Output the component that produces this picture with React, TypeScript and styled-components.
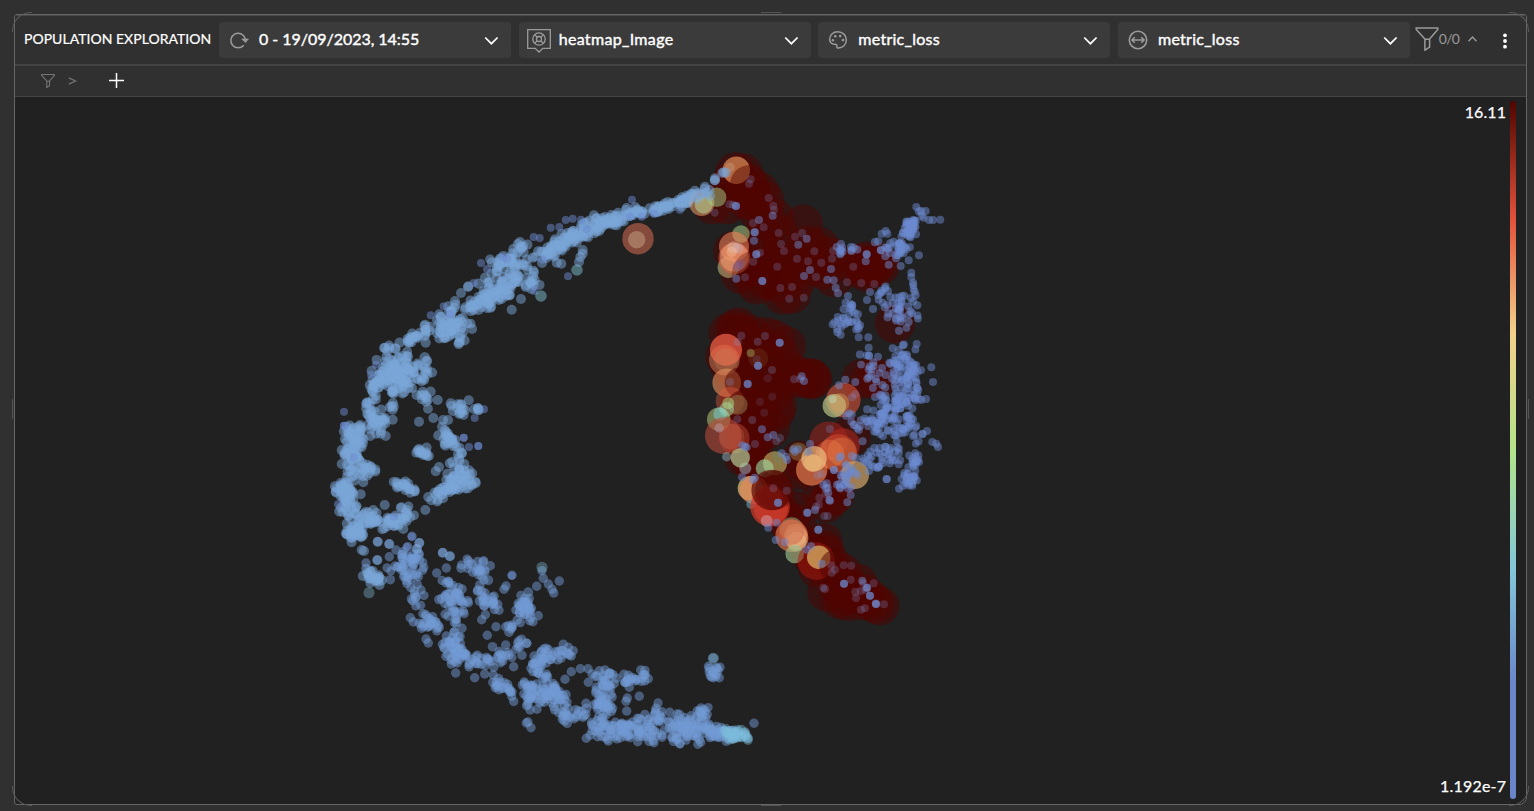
import React from "react";
import styled, { createGlobalStyle } from "styled-components";

const GlobalStyle = createGlobalStyle`
  * { box-sizing: border-box; }
  html, body { margin: 0; background: #303030; overflow: hidden; }
  body { font-family: Lato, "Noto Sans", sans-serif; color: #fff; }
`;

const Page = styled.main`
  position: relative;
  width: 1534px;
  height: 811px;
  padding: 14px 7px 6px 14px;
  background: #303030;
`;

const Panel = styled.section`
  display: flex;
  flex-direction: column;
  width: 1513px;
  height: 791px;
  border: 1px solid #666;
  border-radius: 3px 3px 8px 3px;
  background: #212121;
`;

const Header = styled.header`
  display: flex;
  align-items: center;
  height: 51px;
  padding: 0 12px 0 9px;
  background: #303030;
  border-top: 1px solid #484848;
  border-bottom: 2px solid #434343;
`;

const Title = styled.h1<{ $spacing: number }>`
  width: 195px;
  margin: 0;
  padding-bottom: 3px;
  font-size: 14px;
  font-weight: 400;
  letter-spacing: ${(p) => p.$spacing}px;
  white-space: nowrap;
  -webkit-text-stroke: 0.2px #fff;
`;

const Select = styled.div`
  display: flex;
  align-items: center;
  width: 292px;
  height: 36px;
  margin-right: 7.67px;
  padding: 0 12px 0 0;
  border-radius: 4px;
  background: #3b3b3b;
`;

const IconSlot = styled.span`
  display: flex;
  justify-content: center;
  width: 40px;
  color: #9b9b9b;
`;

const Value = styled.span<{ $spacing: number }>`
  flex: 1;
  padding-bottom: 2px;
  font-size: 16px;
  font-weight: 400;
  line-height: 20px;
  letter-spacing: ${(p) => p.$spacing}px;
  white-space: nowrap;
  -webkit-text-stroke: 0.4px #fff;
`;

const FilterCount = styled.div`
  display: flex;
  align-items: center;
  margin-left: -3px;
  padding-bottom: 2px;
  color: #9b9b9b;
  font-size: 14px;
  svg + span { margin: 0 9px 2px 0; letter-spacing: -0.6px; }
`;

const MenuButton = styled.button`
  display: flex;
  margin: 1px 0 0 auto;
  padding: 0 7px;
  border: 0;
  background: none;
  color: #fff;
`;

const FilterRow = styled.div`
  display: flex;
  align-items: center;
  height: 31px;
  padding: 0 0 1px 26px;
  background: #303030;
  border-bottom: 1px solid #464646;
  color: #767676;
`;

const Crumb = styled.span`
  display: flex;
  margin: 0 32px 0 13px;
`;

const Plot = styled.div`
  display: flex;
  position: relative;
  flex: 1;
`;

const Legend = styled.div`
  position: absolute;
  top: 4px;
  right: 10px;
  bottom: 5px;
  display: flex;
  gap: 4px;
`;

const LegendLabels = styled.div`
  display: flex;
  flex-direction: column;
  justify-content: space-between;
  align-items: flex-end;
  padding: 1px 0 3px;
  font-size: 16px;
  line-height: 20px;
  -webkit-text-stroke: 0.25px #fff;
`;

const LegendText = styled.span<{ $spacing: number }>`
  letter-spacing: ${(p) => p.$spacing}px;
  margin-right: ${(p) => -p.$spacing}px;
`;

const LegendBar = styled.div`
  width: 6px;
  border-radius: 3px;
  background: linear-gradient(#500500, #e3523b 17%, #f3d28a 33.3%, #b3e38a 50%, #83c7d8 67%, #6b85cb 83.5%);
`;

const Corner = styled.i<{ $v: "top" | "bottom"; $h: "left" | "right" }>`
  position: absolute;
  ${(p) => (p.$v === "top" ? "top: 12px" : "bottom: 5px")};
  ${(p) => (p.$h === "left" ? "left: 12px" : "right: 5px")};
  width: 20px;
  height: 20px;
  border: 0 solid #595959;
  ${(p) => `border-${p.$v}-width: 1px; border-${p.$h}-width: 1px; border-${p.$v}-${p.$h}-radius: 19px;`}
`;

const Grip = styled.i<{ $side: "top" | "bottom" | "left" | "right" }>`
  position: absolute;
  background: #555;
  ${(p) =>
    p.$side === "top" || p.$side === "bottom"
      ? `left: 761px; width: 20px; height: 1px; ${p.$side}: ${p.$side === "top" ? 12 : 5}px;`
      : `top: 399px; width: 1px; height: 20px; ${p.$side}: ${p.$side === "left" ? 12 : 5}px;`}
`;

/* ---------- icons ---------- */

const Reload = () => (
  <svg width="20" height="20" viewBox="0 0 20 20" fill="none" stroke="currentColor" strokeWidth="1.5">
    <path d="M14.8 15.2A7.3 7.3 0 1 1 16.1 8.2V10" />
    <path d="M12.8 9l3.6 3.6L19.4 9z" fill="currentColor" strokeWidth=".8" />
  </svg>
);

const Heatmap = () => (
  <svg width="24" height="26" viewBox="0 0 24 26" fill="none" stroke="currentColor" strokeWidth="1.3">
    <path d="M.7 2.7h22.6v18.6h-7.5L12 25l-3.8-3.7H.7z" />
    <circle cx="12" cy="12" r="6.2" />
    <circle cx="12" cy="12" r="2.5" />
    <path d="M7.6 7.6l2.6 2.6m3.6 3.6l2.6 2.6m0-8.8l-2.6 2.6m-3.6 3.6l-2.6 2.6" />
  </svg>
);

const Palette = () => (
  <svg width="20" height="20" viewBox="0 0 20 20" fill="none" stroke="currentColor" strokeWidth="1.5">
    <path d="M9.8 1.8C4.900 1.800 1.700 5 1.700 9.500c0 3 2.100 4.900 5 4.700 1.500-.1 2.300.5 2.200 1.900-.1 1.300.1 2.100 1.500 2 4.500-.2 7.900-3.500 7.900-8 0-4.800-3.500-8.300-8.500-8.300z" />
    <g fill="currentColor" stroke="none">
      <circle cx="4.900" cy="10.300" r="1.200" />
      <circle cx="7.300" cy="6.200" r="1.300" />
      <circle cx="12.200" cy="6.100" r="1.300" />
      <circle cx="15" cy="10.100" r="1.300" />
    </g>
  </svg>
);

const Width = () => (
  <svg width="20" height="20" viewBox="0 0 20 20" fill="none" stroke="currentColor" strokeWidth="1.600">
    <circle cx="10" cy="10" r="8.700" />
    <path d="M4 10h12M6.700 7.300L4 10l2.700 2.700M13.300 7.300L16 10l-2.700 2.700" />
  </svg>
);

const ChevronDown = () => (
  <svg width="15" height="10" viewBox="0 0 15 10" fill="none" stroke="#fff" strokeWidth="1.700" style={{ marginTop: 2 }}>
    <path d="M1.200 1.500l6.200 6.200 6.200-6.200" />
  </svg>
);

const ChevronUp = () => (
  <svg width="9" height="6" viewBox="0 0 9 6" fill="none" stroke="currentColor" strokeWidth="1.300">
    <path d="M.5 5.200L4.500 1l4 4.200" />
  </svg>
);

const Funnel = ({ size, weight }: { size: number; weight: number }) => (
  <svg width={size} height={size} viewBox="0 0 24 24" fill="none" stroke="currentColor" strokeWidth={weight}>
    <path d="M1.200 1h21.600v1.500L14.600 12v8.200l-4.700 3V12L1.200 2.500zM9.900 12.300h4.700" />
  </svg>
);

const Dots = () => (
  <svg width="4" height="16" viewBox="0 0 4 16" fill="currentColor">
    <circle cx="2" cy="2.300" r="1.900" />
    <circle cx="2" cy="8" r="1.900" />
    <circle cx="2" cy="13.700" r="1.900" />
  </svg>
);

const Plus = () => (
  <svg width="15" height="15" viewBox="0 0 15 15" fill="none" stroke="#fff" strokeWidth="1.500">
    <path d="M7.500 0v15M0 7.500h15" />
  </svg>
);

const Next = () => (
  <svg width="9" height="8" viewBox="0 0 9 8" fill="none" stroke="currentColor" strokeWidth="1.300">
    <path d="M.8.800L7.700 4 .8 7.200" />
  </svg>
);

/* ---------- scatter plot ---------- */

const SKY = "#7aa5d8";
const BLUE = "#7299d4";
const INDIGO = "#6c89d0";
const WINE = "#4f0400";

type Sample = [number, number, number, string, number?];

function makeRandom(seed: number) {
  let s = seed;
  return () => {
    s = (s * 1664525 + 1013904223) % 4294967296;
    return s / 4294967296;
  };
}

/* Each band: x1, y1, x2, y2, half width, number of samples. */
type Band = [number, number, number, number, number, number];

function spread(bands: Band[], r: number, color: string, seed: number, grow: number, opacity = 0.5): Sample[] {
  const rnd = makeRandom(seed);
  const out: Sample[] = [];
  for (const [x1, y1, x2, y2, w, n] of bands) {
    const len = Math.hypot(x2 - x1, y2 - y1) || 1;
    const ux = (x2 - x1) / len;
    const uy = (y2 - y1) / len;
    for (let i = 0; i < n; i++) {
      const t = rnd();
      const angle = rnd() * Math.PI * 2;
      const dist = Math.pow(rnd(), 0.65) * w * grow;
      const k = Math.sin(angle) * dist;
      const j = Math.cos(angle) * dist * 0.8;
      out.push([
        x1 + (x2 - x1) * t - uy * k + ux * j,
        y1 + (y2 - y1) * t + ux * k + uy * j,
        r * (0.96 + rnd() * 0.08),
        color,
        opacity,
      ]);
    }
  }
  return out;
}

/* Positions given in thirds of a pixel from a local origin. */
function local(ox: number, oy: number, r: number, color: string, xy: number[], opacity = 0.5): Sample[] {
  const out: Sample[] = [];
  for (let i = 0; i < xy.length; i += 2) out.push([ox + xy[i] / 3, oy + xy[i + 1] / 3, r, color, opacity]);
  return out;
}

function discs(ox: number, oy: number, rows: [number, number, number, string, number?][]): Sample[] {
  return rows.map(([x, y, r, c, o]) => [ox + x / 3, oy + y / 3, r / 3, c, o]);
}

const arc = spread(
  [
    [702, 193, 680, 202, 5, 28], [682, 202, 655, 209, 4, 34], [655, 209, 628, 215, 3.5, 20],
    [628, 215, 605, 223, 6, 36], [605, 223, 575, 234, 8, 46], [575, 235, 552, 249, 8, 34],
    [558, 246, 538, 256, 8, 24], [526, 246, 515, 250, 6, 10], [510, 258, 495, 264, 9, 18],
    [520, 266, 500, 280, 14, 40], [530, 262, 534, 288, 8, 14], [508, 288, 485, 304, 9, 36],
    [487, 298, 466, 310, 7, 24], [485, 285, 500, 285, 10, 14], [455, 307, 445, 320, 9, 12],
    [440, 329, 463, 327, 12, 50], [458, 342, 463, 344, 4, 4], [430, 326, 412, 340, 5, 16],
    [408, 345, 412, 340, 5, 8], [388, 350, 400, 348, 6, 8],
    [382, 376, 408, 367, 17, 78], [392, 372, 408, 384, 13, 34], [420, 360, 428, 375, 7, 14],
    [420, 385, 430, 404, 10, 14], [395, 385, 392, 410, 3, 10], [375, 378, 370, 405, 8, 20],
    [370, 412, 382, 428, 11, 36], [352, 425, 355, 445, 10, 40], [352, 445, 354, 475, 11, 52],
    [365, 465, 373, 474, 7, 12], [343, 485, 347, 500, 9, 48], [345, 508, 360, 518, 9, 20],
    [352, 525, 357, 538, 9, 38], [365, 520, 395, 522, 9, 38], [395, 522, 410, 510, 8, 20],
    [396, 482, 416, 492, 5, 20], [452, 405, 464, 412, 7, 14], [474, 412, 482, 409, 4, 5],
    [442, 430, 453, 446, 8, 22], [417, 447, 430, 458, 6, 14], [458, 450, 459, 468, 8, 12],
    [468, 477, 450, 487, 11, 46], [450, 488, 432, 499, 6, 24], [366, 573, 380, 582, 6, 26],
  ],
  5,
  SKY,
  17,
  1.02,
);

const tail = spread(
  [
    [395, 568, 420, 572, 15, 40], [402, 553, 425, 560, 8, 9], [415, 585, 425, 622, 11, 16],
    [422, 622, 437, 624, 8, 22], [450, 575, 460, 608, 11, 34], [465, 566, 490, 574, 10, 22],
    [478, 590, 492, 610, 8, 24], [441, 600, 460, 620, 9, 16], [451, 637, 457, 658, 11, 52],
    [463, 664, 490, 660, 10, 18], [492, 655, 505, 660, 10, 14], [522, 595, 527, 620, 10, 34],
    [495, 682, 515, 694, 7, 20], [518, 693, 552, 695, 13, 44], [535, 660, 545, 680, 10, 28],
    [540, 655, 570, 652, 7, 26], [545, 685, 562, 705, 11, 34], [556, 718, 586, 712, 9, 24],
    [590, 672, 616, 682, 8, 18], [602, 680, 606, 720, 10, 46], [590, 728, 625, 732, 10, 42],
    [625, 730, 660, 734, 11, 42], [640, 722, 665, 715, 8, 20], [625, 683, 645, 676, 6, 18],
    [667, 725, 697, 732, 14, 62], [695, 720, 705, 712, 8, 14], [700, 731, 735, 734, 8, 48],
    [711, 668, 718, 676, 7, 10], [511, 625, 520, 648, 6, 10],
  ],
  4.7,
  BLUE,
  83,
  1.03,
);

const teal = spread([[728, 734, 751, 733, 8, 34]], 5, "#7cbbdd", 5, 1, 0.4);

const loose: Sample[] = [
  ...local(350, 520, 4.7, BLUE, [
    83, 65, 117, 72, 173, 80, 208, 68, 186, 49, 201, 86, 138, 90, 118, 110, 82, 121, 48, 129, 260, 159, 278, 98,
    299, 109, 289, 144, 401, 122, 421, 137, 486, 166, 462, 208, 468, 198, 432, 229, 447, 271, 395, 299, 412, 346,
    438, 320, 467, 320, 487, 315, 565, 287, 549, 305, 467, 375, 491, 440, 516, 406, 498, 388, 530, 370, 530, 370,
    560, 199, 580, 175, 595, 192, 611, 219, 606, 208, 181, 293, 190, 306, 228, 357, 235, 369, 336, 325, 317, 459,
    374, 473, 404, 462, 430, 465, 640, 373, 645, 478, 664, 455, 691, 446, 714, 446, 715, 487, 765, 450, 822, 463,
    868, 529, 832, 534, 828, 544, 838, 502, 924, 549, 918, 565, 830, 573, 709, 655, 775, 663, 708, 550, 732, 554,
    534, 606, 529, 609, 543, 623, 540, 570, 561, 568, 534, 553, 1061, 569, 1067, 593, 872, 450, 895, 476, 886, 464,
    1212, 610, 1052, 667, 1090, 415, 628, 183, 576, 152, 989, 670, 990, 672, 912, 668, 863, 665, 1078, 445, 1110, 442,
    1090, 460, 1090, 473, 1108, 473,
  ]),
  ...local(320, 330, 5, SKY, [
    297, 275, 340, 264, 369, 270, 384, 270, 366, 290, 218, 239, 218, 269, 353, 210, 197, 318, 151, 318, 65, 402,
    130, 457, 122, 493, 194, 525, 160, 540, 250, 597, 187, 598, 173, 635, 208, 642, 298, 639, 291, 657, 125, 660,
    132, 663, 172, 690, 357, 411, 347, 424, 316, 540, 368, 668, 390, 679, 446, 211, 382, 431, 389, 400,
  ]),
  ...local(400, 170, 5, SKY, [
    335, 419, 363, 387, 582, 136, 680, 114, 706, 112, 548, 240, 548, 251, 541, 261, 537, 276, 204, 351, 205, 349,
    183, 369, 165, 393, 484, 281, 470, 278, 399, 319, 377, 351, 377, 346, 60, 488, 77, 518,
  ]),
  ...local(400, 170, 4, INDIGO, [
    696, 89, 497, 150, 518, 146, 543, 149, 452, 173, 478, 171, 401, 201, 419, 204, 243, 279, 261, 297, 221, 339,
    504, 319, 403, 363, 308, 261, 321, 267, 92, 436, 131, 409, 150, 432, 427, 269, 560, 178, 690, 140, 725, 140,
    763, 132, 840, 119,
  ]),
  ...local(320, 330, 4, INDIGO, [
    72, 245, 72, 287, 72, 287, 101, 382, 260, 651, 275, 620, 447, 351, 475, 348, 475, 348, 492, 238, 464, 264,
    431, 323, 431, 323, 54, 523, 168, 104, 153, 134, 575, 737, 222, 560,
  ]),
  ...local(350, 520, 5.6, "#7db4cf", [576, 142, 57, 218, 1090, 415], 0.4),
  ...local(400, 170, 5.8, "#7dc0cf", [531, 300, 423, 378], 0.5),
];

const wine: Sample[] = [
  ...local(680, 140, 19.500, WINE, [
    165, 95, 190, 98, 150, 130, 97, 194, 140, 195, 200, 130, 215, 158, 240, 155, 255, 182, 230, 210, 260, 240,
    285, 235, 370, 252, 300, 285, 250, 290, 385, 315, 412, 340, 390, 380, 340, 365, 330, 400, 290, 370, 240, 380,
    200, 385, 158, 332, 180, 403, 230, 435, 290, 430, 310, 466, 335, 463, 450, 350, 462, 413, 430, 390, 540, 370,
    556, 378, 580, 380, 565, 390, 600, 378, 530, 385, 240, 330, 260, 420, 350, 420, 420, 320, 305, 330, 200, 180,
    225, 185, 165, 135, 560, 362, 595, 365, 560, 398,
  ]),
  ...local(680, 300, 20, WINE, [
    645, 70, 545, 237, 575, 235, 595, 235, 512, 408, 165, 90, 145, 100, 180, 100, 215, 105, 260, 112, 285, 120,
    318, 138, 300, 170, 250, 180, 200, 180, 150, 195, 136, 170, 165, 240, 200, 250, 250, 240, 300, 240, 330, 215,
    370, 232, 394, 235, 397, 238, 350, 235, 290, 320, 285, 335, 240, 330, 200, 320, 180, 310, 270, 385, 235, 400,
    200, 400, 220, 450, 210, 470, 190, 430, 230, 360, 180, 290, 180, 350, 160, 140, 240, 285, 285, 275, 210, 135,
    255, 150, 390, 236, 175, 82,
  ]),
  ...local(680, 440, 19.500, WINE, [
    215, 10, 190, 50, 225, 80, 250, 110, 270, 165, 290, 200, 330, 258, 350, 250, 340, 210, 380, 318, 430, 307,
    430, 330, 440, 345, 425, 375, 412, 385, 440, 457, 475, 410, 490, 400, 500, 435, 490, 470, 505, 485, 535, 430,
    550, 460, 560, 470, 585, 492, 600, 498, 545, 482, 400, 350, 450, 175, 440, 190, 425, 160, 465, 165, 470, 130,
    385, 80, 360, 60, 360, 90, 430, 60, 480, 480, 520, 460, 310, 230, 390, 340, 470, 430, 575, 480, 440, 80,
  ]),
];

const hot: Sample[] = [
  ...discs(400, 170, [[714, 206, 47, "#e87355", 0.5], [710, 209, 26, "#c7a486", 0.5]]),
  ...discs(680, 140, [
    [65, 190, 38, "#efb078"], [71, 194, 27, "#b7df9e"], [110, 172, 29, "#a6cf86"],
    [183, 282, 26, "#b4d889"], [145, 382, 32, "#d8cd8d"], [163, 355, 48, "#e06547"], [162, 320, 45, "#f0875f", 0.55],
    [163, 352, 43, "#ffb584", 0.4], [169, 91, 41, "#ec995d", 0.65], [150, 82, 14, "#c8b49a", 0.3],
  ]),
  ...discs(680, 140, [
    [210, 135, 60, WINE, 0.45], [230, 405, 75, WINE, 0.3], [160, 322, 18, "#d9c3c2", 0.35], [175, 325, 16, "#c4b3ce", 0.35],
    [155, 335, 16, "#ffc9a0", 0.35], [172, 380, 14, "#77609a", 0.4], [182, 372, 14, "#77609a", 0.4],
  ]),
  ...discs(680, 300, [
    [133, 180, 46, "#c9835d"], [140, 248, 43, "#ea935f", 0.6], [180, 248, 46, WINE, 0.5],
    [150, 303, 43, "#e15c42", 0.4], [190, 320, 50, WINE, 0.5], [212, 159, 12, "#b2d27a", 0.4], [235, 175, 30, "#8b6533", 0.2],
    [138, 149, 48, "#f2654a", 0.7], [137, 180, 35, "#c58a60", 0.25],
    [116, 358, 35, "#c6d582"], [173, 314, 30, "#a5a166", 0.4], [140, 328, 22, "#99ddaa"], [120, 342, 20, "#78d7db"],
    [145, 310, 18, "#adde85"], [130, 407, 55, "#b8493b", 0.6], [163, 415, 46, "#b44431", 0.5], [155, 410, 38, "#ef9770", 0.15],
    [118, 384, 14, "#d3a3a3", 0.4],
    [140, 470, 14, "#83bac7"], [196, 505, 18, "#9fbccc"], [181, 473, 29, "#b0cb98", 0.7],
    [490, 300, 52, "#e9573b", 0.55], [463, 317, 35, "#b8c488", 0.7], [479, 309, 29, "#e2a65e", 0.4], [458, 298, 12, "#b9d6ba", 0.5],
    [355, 455, 28, "#b6914b", 0.4], [285, 490, 36, "#d5c874", 0.55], [254, 505, 27, "#9edca1", 0.6],
    [446, 422, 58, "#a9221a"], [475, 460, 57, "#ef7043"], [490, 435, 50, "#b52c20"],
    [395, 510, 47, "#ed8556", 0.65], [450, 462, 43, "#f07749", 0.4], [485, 455, 43, "#ec9651", 0.3],
    [402, 476, 38, "#edc688", 0.65], [525, 525, 42, "#e0b070", 0.65], [398, 490, 26, "#f0be7a", 0.45],
  ]),
  ...discs(680, 440, [
    [210, 145, 37, "#e7c079", 0.7], [222, 150, 42, "#ed8c5c", 0.6], [213, 193, 14, "#73b8cc"],
    [270, 200, 59, "#d83828", 0.7], [272, 205, 50, "#d84432", 0.5], [275, 150, 61, "#5b0804", 0.7],
    [285, 150, 59, WINE, 0.4], [270, 170, 38, "#8e1712", 0.3],
    [335, 267, 35, "#98bd85"], [350, 295, 35, "#d2d18e"], [335, 287, 49, "#e8744b", 0.65], [347, 285, 34, "#f3b885", 0.4],
    [350, 305, 30, "#f4d39c", 0.4], [334, 276, 38, "#cc654a", 0.5],
    [344, 342, 28, "#9bc38d", 0.65], [409, 364, 56, "#a81c12", 0.5], [416, 352, 35, "#dcb568", 0.72], [470, 380, 52, WINE, 0.5],
    [260, 243, 18, "#d3a3b3", 0.5],
  ]),
];

const right: Sample[] = [
  ...spread(
    [
      [922, 213, 907, 228, 6, 22], [912, 225, 900, 252, 7, 28], [903, 240, 893, 258, 9, 18],
      [842, 246, 842, 256, 5, 6], [851, 245, 854, 252, 5, 5], [870, 243, 892, 248, 5, 9],
      [838, 325, 853, 315, 9, 18], [842, 305, 854, 303, 6, 6], [853, 310, 857, 333, 6, 7],
      [895, 300, 907, 320, 14, 34], [911, 271, 917, 305, 4, 6], [877, 290, 888, 296, 8, 7],
      [902, 352, 908, 385, 13, 62], [905, 388, 912, 410, 13, 32], [880, 405, 900, 408, 13, 40],
      [877, 412, 880, 430, 12, 24], [898, 420, 910, 448, 14, 36], [868, 460, 895, 455, 11, 38],
      [910, 463, 918, 461, 6, 14], [909, 470, 912, 482, 7, 20], [850, 463, 835, 490, 13, 28],
      [865, 370, 895, 382, 14, 12], [850, 412, 870, 425, 14, 14], [868, 355, 872, 380, 8, 5],
    ],
    4,
    INDIGO,
    41,
    1.1,
  ),
  ...local(680, 140, 4, INDIGO, [
    709, 201, 737, 213, 747, 240, 759, 240, 781, 239, 617, 273, 605, 281, 622, 281, 717, 346, 662, 378, 686, 361,
    694, 398, 694, 411, 699, 428, 560, 343, 560, 343, 557, 364, 616, 349, 626, 374, 570, 456, 504, 468, 467, 443,
    474, 460, 561, 480, 579, 507, 595, 466, 624, 453, 229, 343, 229, 343, 247, 423, 247, 423, 224, 277, 224, 277,
    237, 240, 222, 302, 168, 198, 168, 198, 169, 416, 355, 314, 380, 296, 453, 387, 372, 408, 461, 421,
    442, 419, 390, 390, 278, 227, 483, 312, 480, 330,
  ]),
  ...local(680, 140, 4, "#8196da", [
    212, 118, 207, 131, 266, 174, 280, 197, 282, 210, 219, 249, 251, 262, 296, 279, 303, 312, 312, 333, 345, 290,
    366, 279, 351, 356, 384, 364, 403, 334, 408, 411, 292, 380, 301, 444, 336, 441, 328, 476, 459, 333, 456, 356,
    424, 368, 240, 338, 195, 412, 220, 365, 148, 193, 159, 194, 104, 218, 501, 427, 544, 429, 583, 432, 520, 380,
    371, 473,
  ], 0.24),
  ...local(680, 300, 4, INDIGO, [
    566, 143, 567, 167, 567, 167, 594, 170, 638, 145, 669, 136, 710, 132, 754, 202, 759, 246, 723, 211, 738, 297,
    724, 300, 741, 393, 727, 402, 728, 402, 757, 426, 769, 431, 774, 441, 656, 493, 620, 537, 665, 537, 580, 187,
    566, 208, 562, 236, 587, 237, 526, 246, 496, 239, 477, 256, 299, 128, 299, 128, 234, 197, 234, 197, 203, 252,
    203, 252, 365, 229, 372, 243, 246, 388, 263, 412, 280, 405, 565, 112, 536, 112,
    482, 104, 458, 73, 686, 66, 657, 92, 195, 440, 200, 442, 187, 436, 305, 460, 318, 470, 321, 480, 340, 448,
    345, 455, 355, 448, 390, 432, 384, 455, 507, 340, 548, 424, 540, 378, 462, 510, 462, 510,
  ]),
  ...local(680, 300, 4, "#8196da", [
    255, 108, 233, 125, 276, 210, 217, 360, 225, 432, 184, 107, 173, 126, 361, 237, 342, 238, 150, 246,
    289, 424, 300, 414, 172, 358, 526, 283, 516, 292, 521, 375, 450, 387, 412, 526, 425, 522,
  ], 0.26),
  ...local(680, 300, 4, "#8196da", [277, 290, 240, 305, 253, 338, 263, 235, 230, 178, 115, 385], 0.14),
  ...local(680, 440, 4, INDIGO, [
    294, 188, 294, 188, 382, 218, 382, 218, 405, 210, 415, 269, 415, 269, 492, 431, 492, 431, 561, 443, 561, 443,
    570, 467, 570, 467, 588, 492, 588, 492, 547, 422, 393, 318, 380, 329, 314, 307, 287, 300, 265, 263, 290, 248,
    440, 130, 443, 143, 448, 180, 450, 182, 502, 187, 512, 165, 425, 371, 186, 111, 218, 120, 224, 113, 668, 138,
    657, 146, 697, 137, 620, 118, 697, 123, 471, 134, 480, 142,
  ]),
  ...local(680, 440, 4, "#8196da", [
    454, 376, 465, 389, 491, 376, 514, 377, 512, 419, 550, 430, 581, 430, 542, 453, 557, 450, 528, 474, 526, 455,
    587, 490, 612, 493, 555, 505, 543, 509, 435, 447, 430, 443, 433, 228, 443, 228, 418, 173, 417, 194, 408, 200,
    437, 162, 320, 152, 455, 398, 280, 145,
  ], 0.24),
  ...local(680, 140, 5, SKY, [
    131, 97, 138, 98, 127, 99, 105, 115, 105, 121, 104, 121, 75, 140, 74, 146, 80, 158, 90, 168, 70, 160, 88, 150,
    62, 165, 45, 152, 40, 170, 50, 178, 28, 172, 20, 190, 12, 178, 5, 200,
  ]),
];

const samples = [...arc, ...tail, ...teal, ...loose, ...wine, ...hot, ...right];

const Scatter = () => (
  <svg width="1511" height="707" viewBox="15 97 1511 707">
    {samples.map(([x, y, r, color, opacity], i) => (
      <circle key={i} cx={x.toFixed(1)} cy={y.toFixed(1)} r={r.toFixed(1)} fill={color} fillOpacity={opacity ?? 0.5} />
    ))}
  </svg>
);

const fields = [
  { icon: <Reload />, text: "0 - 19/09/2023, 14:55", spacing: -0.03 },
  { icon: <Heatmap />, text: "heatmap_Image", spacing: 0.33 },
  { icon: <Palette />, text: "metric_loss", spacing: 0.27 },
  { icon: <Width />, text: "metric_loss", spacing: 0.27 },
];

export default function App() {
  return (
    <Page>
      <GlobalStyle />
      <Panel>
        <Header>
          <Title $spacing={0.03}>POPULATION EXPLORATION</Title>
          {fields.map((f, i) => (
            <Select key={i}>
              <IconSlot>{f.icon}</IconSlot>
              <Value $spacing={f.spacing}>{f.text}</Value>
              <ChevronDown />
            </Select>
          ))}
          <FilterCount>
            <Funnel size={24} weight={1.5} />
            <span>0/0</span>
            <ChevronUp />
          </FilterCount>
          <MenuButton aria-label="More options">
            <Dots />
          </MenuButton>
        </Header>
        <FilterRow>
          <Funnel size={14} weight={1.800} />
          <Crumb>
            <Next />
          </Crumb>
          <Plus />
        </FilterRow>
        <Plot>
          <Scatter />
          <Legend>
            <LegendLabels>
              <LegendText $spacing={0.1}>16.11</LegendText>
              <LegendText $spacing={0.2}>1.192e-7</LegendText>
            </LegendLabels>
            <LegendBar />
          </Legend>
        </Plot>
      </Panel>
      <Corner $v="top" $h="left" />
      <Corner $v="top" $h="right" />
      <Corner $v="bottom" $h="left" />
      <Corner $v="bottom" $h="right" />
      <Grip $side="top" />
      <Grip $side="bottom" />
      <Grip $side="left" />
      <Grip $side="right" />
    </Page>
  );
}
